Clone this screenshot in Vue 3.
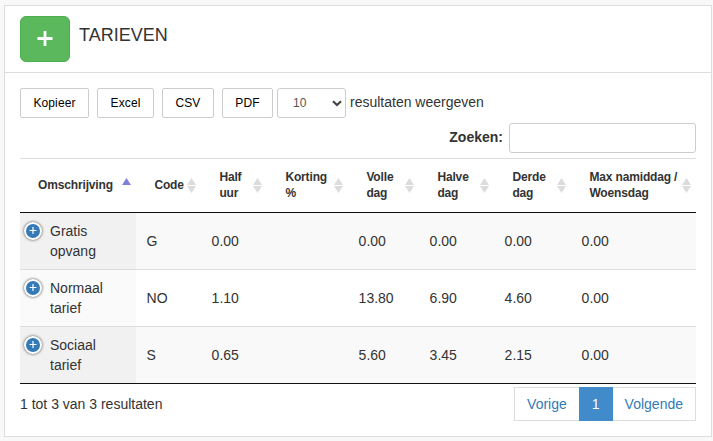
<template>
    <div class="panel">
        <div class="panel-heading">
            <button class="btn-add" type="button" aria-label="Toevoegen">
                <svg width="18" height="18" viewBox="0 0 18 18">
                    <path d="M9 1V16M1.5 8.5H16.5" stroke="#fff" stroke-width="2.8" fill="none" />
                </svg>
            </button>
            <h3>TARIEVEN</h3>
        </div>
        <div class="panel-body">
            <div class="toolbar">
                <button v-for="b in buttons" :key="b.label" class="dt-button" type="button" :style="{ width: b.width + 'px' }">{{ b.label }}</button>
                <label class="length">
                    <span class="select-wrap">
                        <select v-model="length">
                            <option v-for="n in [10, 25, 50, 100]" :key="n" :value="n">{{ n }}</option>
                        </select>
                        <svg class="chevron" width="10" height="7" viewBox="0 0 10 7">
                            <path d="M1 1.2L5 5L9 1.2" stroke="#444" stroke-width="2.2" fill="none" />
                        </svg>
                    </span>
                    <span class="length-text">resultaten weergeven</span>
                </label>
            </div>
            <div class="filter">
                <label for="search">Zoeken:</label>
                <input id="search" v-model="search" type="text">
            </div>
            <table>
                <colgroup>
                    <col v-for="c in columns" :key="c.key" :style="{ width: c.width + 'px' }">
                </colgroup>
                <thead>
                    <tr>
                        <th v-for="c in columns" :key="c.key">
                            <div class="th-inner">
                                <span>{{ c.label }}</span>
                                <svg class="sort" width="9" height="15" viewBox="0 0 9 15">
                                    <path v-if="c.key === 'name'" d="M4.5 0L9 7H0Z" fill="#8080dc" />
                                    <path v-else d="M4.5 0L9 7H0ZM0 8H9L4.5 15Z" fill="#dcdcdc" />
                                </svg>
                            </div>
                        </th>
                    </tr>
                </thead>
                <tbody>
                    <tr v-for="row in filtered" :key="row.code">
                        <td v-for="c in columns" :key="c.key">
                            <span v-if="c.key === 'name'" class="expand">
                                <svg width="14" height="14" viewBox="0 0 14 14">
                                    <path d="M7 3V10M3.5 6.5H10.5" stroke="#fff" stroke-width="1.2" />
                                </svg>
                            </span>
                            {{ row[c.key] }}
                        </td>
                    </tr>
                </tbody>
            </table>
            <div class="footer">
                <div class="info">1 tot 3 van 3 resultaten</div>
                <ul class="pagination">
                    <li><a>Vorige</a></li>
                    <li class="active"><a>1</a></li>
                    <li><a>Volgende</a></li>
                </ul>
            </div>
        </div>
    </div>
</template>


<script setup>

    import {ref, computed} from 'vue'

    const buttons = [
        { label: 'Kopieer', width: 69 },
        { label: 'Excel', width: 57 },
        { label: 'CSV', width: 52 },
        { label: 'PDF', width: 51 },
    ]
    let length = ref(10)
    let search = ref("")

    const columns = [
        { key: 'name', label: 'Omschrijving', width: 116 },
        { key: 'code', label: 'Code', width: 65 },
        { key: 'halfHour', label: 'Half uur', width: 66 },
        { key: 'discount', label: 'Korting %', width: 81 },
        { key: 'full', label: 'Volle dag', width: 71 },
        { key: 'half', label: 'Halve dag', width: 75 },
        { key: 'third', label: 'Derde dag', width: 77 },
        { key: 'max', label: 'Max namiddag / Woensdag', width: 125 },
    ]

    const rows = [
        { name: 'Gratis opvang', code: 'G', halfHour: '0.00', discount: '', full: '0.00', half: '0.00', third: '0.00', max: '0.00' },
        { name: 'Normaal tarief', code: 'NO', halfHour: '1.10', discount: '', full: '13.80', half: '6.90', third: '4.60', max: '0.00' },
        { name: 'Sociaal tarief', code: 'S', halfHour: '0.65', discount: '', full: '5.60', half: '3.45', third: '2.15', max: '0.00' },
    ]

    const filtered = computed(() => {
        return rows.filter(r => r.name.toLowerCase().includes(search.value.toLowerCase()))
    })

</script>

<style>
body {
    background: #f8f8f8;
}
</style>

<style scoped>
* {
    box-sizing: border-box;
}

.panel {
    width: 708px;
    height: 432px;
    margin: 5px 0 0 4px;
    border: 1px solid #ddd;
    background: #fff;
    color: #333;
    font-family: "Liberation Sans", Arial, sans-serif;
    font-size: 14px;
    line-height: 20px;
}

.panel-heading {
    display: flex;
    height: 67px;
    padding: 10px 15px;
    border-bottom: 1px solid #ddd;
}

.btn-add {
    display: flex;
    align-items: center;
    justify-content: center;
    width: 50px;
    height: 46px;
    padding: 0;
    border: 1px solid #4cae4c;
    border-radius: 6px;
    background: #5cb85c;
}

h3 {
    margin: 9px 0 0 9px;
    font-size: 18px;
    font-weight: normal;
    line-height: 20px;
}

.panel-body {
    padding: 15px;
}

.toolbar {
    display: flex;
    height: 30px;
}

.dt-button {
    height: 30px;
    margin-right: 8px;
    padding: 0;
    border: 1px solid #ccc;
    border-radius: 2px;
    background: #fff;
    color: #000;
    font: 12px "Liberation Sans", Arial, sans-serif;
    letter-spacing: 0.1px;
}

.length {
    display: flex;
    align-items: center;
    gap: 4px;
    margin-left: -4px;
}

.length-text {
    padding-bottom: 2px;
}

.select-wrap {
    position: relative;
}

select {
    display: block;
    width: 69px;
    height: 30px;
    padding: 0 15px;
    appearance: none;
    border: 1px solid #ccc;
    border-radius: 3px;
    background: #fff;
    color: #555;
    font: 12px "Liberation Sans", Arial, sans-serif;
}

.chevron {
    position: absolute;
    top: 12px;
    right: 4px;
}

.filter {
    display: flex;
    align-items: center;
    justify-content: flex-end;
    gap: 6px;
    margin: 5px 0;
    font-weight: bold;
}

.filter label {
    padding-bottom: 2px;
}

input {
    width: 187px;
    height: 30px;
    padding: 5px 10px;
    border: 1px solid #ccc;
    border-radius: 3px;
    background: #fff;
}

table {
    width: 676px;
    table-layout: fixed;
    border-collapse: separate;
    border-spacing: 0;
    border-top: 1px solid #ddd;
    border-bottom: 1px solid #111;
}

th {
    height: 54px;
    padding: 0 5px 0 18.4px;
    border-bottom: 1px solid #111;
    font-size: 12px;
    line-height: 16px;
    letter-spacing: -0.15px;
    text-align: left;
}

th:first-child {
    padding-left: 18px;
}

.th-inner {
    display: flex;
    align-items: center;
    justify-content: space-between;
}

.th-inner span {
    padding-bottom: 2px;
}

.sort {
    flex: none;
}

td {
    padding: 8px 10px 8px 10.6px;
    vertical-align: middle;
}

tbody tr + tr td {
    border-top: 1px solid #ddd;
}

tbody tr:nth-child(odd) td {
    background: #f9f9f9;
}

td:first-child {
    position: relative;
    padding-left: 30px;
    padding-right: 30px;
    background: #fafafa;
}

tbody tr:nth-child(odd) td:first-child {
    background: #f1f1f1;
}

.expand {
    position: absolute;
    top: 9px;
    left: 4px;
    width: 18px;
    height: 18px;
    border: 2px solid #fff;
    border-radius: 50%;
    background: #337ab7;
    box-shadow: 0 0 3px #444;
}

.expand svg {
    display: block;
}

.footer {
    display: flex;
    justify-content: space-between;
    padding-top: 3px;
}

.info {
    padding-top: 7px;
}

.pagination {
    display: flex;
    margin: 0;
    padding: 0;
    list-style: none;
}

.pagination a {
    display: block;
    height: 34px;
    margin-left: -1px;
    padding: 6px 12px;
    border: 1px solid #ddd;
    background: #fff;
    color: #337ab7;
}

.pagination .active a {
    position: relative;
    border-color: #428bca;
    background: #428bca;
    color: #fff;
}
</style>
